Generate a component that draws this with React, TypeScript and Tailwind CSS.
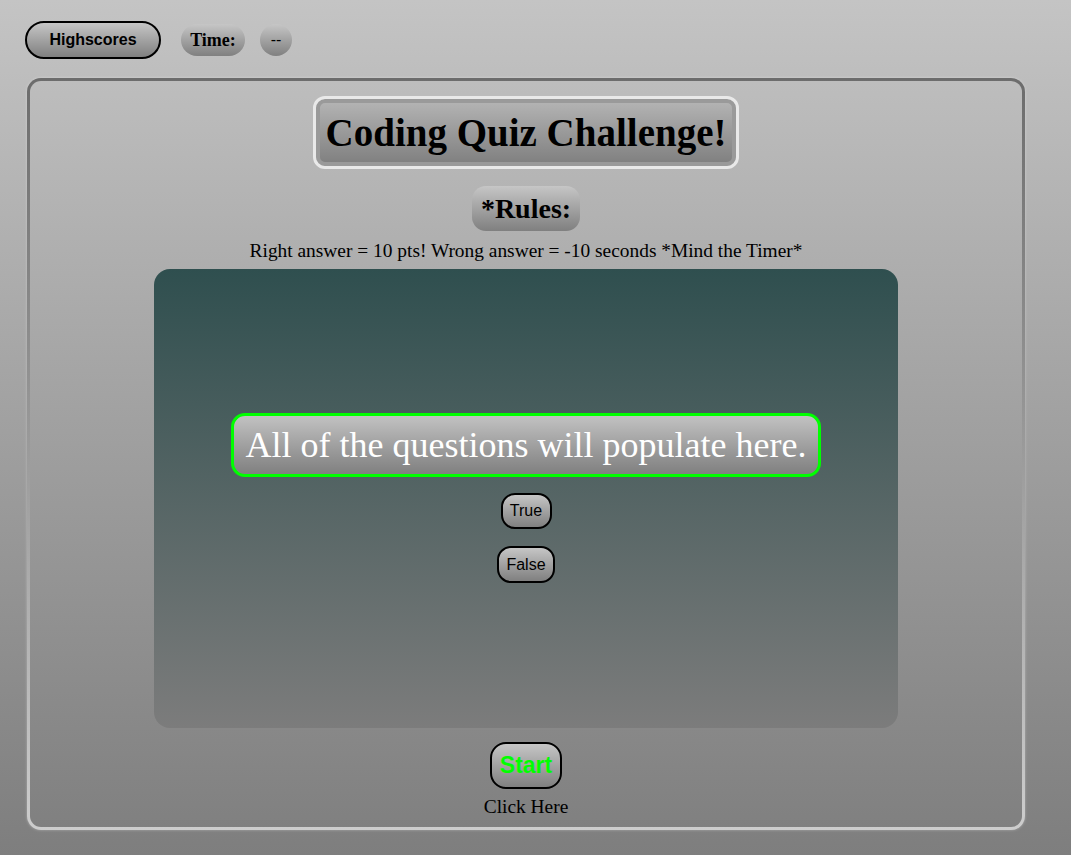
import React from "react";

const btnGrad = "bg-gradient-to-b from-[#c6c6c6] to-[#808080]";

export default function App() {
  return (
    <div className="h-[855px] w-full overflow-hidden bg-gradient-to-b from-[#c4c4c4] to-[#7e7e7e] pt-[21px] font-['Liberation_Serif','Times_New_Roman',serif] text-black">
      <header className="flex items-center pl-[25px]">
        <button
          className={`flex h-[38px] w-[136px] items-center justify-center rounded-full border-2 border-black ${btnGrad} font-['Liberation_Sans',Arial,sans-serif] text-[16px] font-bold`}
        >
          Highscores
        </button>
        <div
          className={`ml-[20px] flex h-[32px] w-[64px] items-center justify-center rounded-full ${btnGrad} text-[18px] font-bold`}
        >
          Time:
        </div>
        <div
          className={`ml-[15px] flex h-[32px] w-[32px] items-center justify-center rounded-full ${btnGrad} font-['Liberation_Sans',Arial,sans-serif] text-[16px]`}
        >
          --
        </div>
      </header>

      <main className="ml-[27px] mt-[19px] h-[752px] w-[998px] rounded-[14px] bg-gradient-to-b from-[#6c6c6c] to-[#cdcdcd] p-[3px] shadow-[0_0_3px_rgba(255,255,255,0.35)]">
        <div className="flex h-full w-full flex-col items-center rounded-[11px] bg-gradient-to-b from-[#c4c4c4] to-[#7e7e7e] bg-fixed pt-[15px]">
          <div className="flex h-[73px] w-[426px] items-center justify-center rounded-[12px] border-[3px] border-[#e9e9e9] bg-gradient-to-b from-[#b6b6b6] to-[#7e7e7e] shadow-[inset_0_0_0_4px_#9a9a9a]">
            <h1 className="text-[39px] font-bold leading-none">Coding Quiz Challenge!</h1>
          </div>

          <div className={`mt-[17px] flex h-[45px] w-[108px] items-center justify-center rounded-[14px] ${btnGrad}`}>
            <h2 className="text-[28px] font-bold leading-none">*Rules:</h2>
          </div>

          <p className="mt-[9px] text-[19.4px] leading-[22px]">
            Right answer = 10 pts! Wrong answer = -10 seconds *Mind the Timer*
          </p>

          <section className="mt-[7px] flex h-[459px] w-[744px] flex-col items-center rounded-[16px] bg-gradient-to-b from-[#2f4f4f] to-[#7c7c7c] pt-[144px]">
            <div className="flex h-[64px] w-[590px] items-center justify-center rounded-[14px] border-[3px] border-[#00ff00] bg-gradient-to-b from-[#c2c2c2] to-[#808080]">
              <span className="text-[36px] leading-none text-white">All of the questions will populate here.</span>
            </div>
            <button
              className={`mt-[16px] flex h-[36px] w-[51px] items-center justify-center rounded-[14px] border-2 border-black ${btnGrad} font-['Liberation_Sans',Arial,sans-serif] text-[16px]`}
            >
              True
            </button>
            <button
              className={`mt-[17px] flex h-[37px] w-[58px] items-center justify-center rounded-[14px] border-2 border-black ${btnGrad} font-['Liberation_Sans',Arial,sans-serif] text-[16px]`}
            >
              False
            </button>
          </section>

          <button
            className={`mt-[14px] flex h-[47px] w-[72px] items-center justify-center rounded-[16px] border-2 border-black ${btnGrad} font-['Liberation_Sans',Arial,sans-serif] text-[23px] font-bold text-[#00ff00]`}
          >
            Start
          </button>
          <p className="mt-[7px] text-[19.4px] leading-[22px]">Click Here</p>
        </div>
      </main>
    </div>
  );
}
